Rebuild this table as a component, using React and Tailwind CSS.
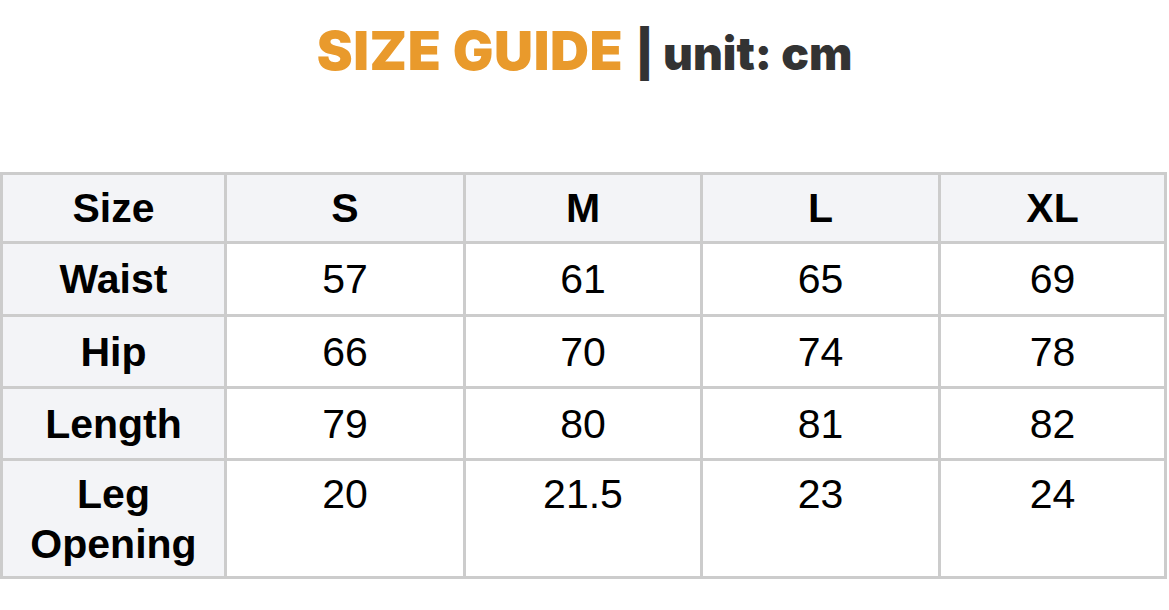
const cols = ["S", "M", "L", "XL"];

const rows = [
  { label: "Waist", values: ["57", "61", "65", "69"], h: "h-[70px]" },
  { label: "Hip", values: ["66", "70", "74", "78"], h: "h-[69px]" },
  { label: "Length", values: ["79", "80", "81", "82"], h: "h-[69px]" },
];

export default function App() {
  return (
    <div className="min-h-[610px] w-[1169px] bg-white font-['Liberation_Sans',Arial,sans-serif] text-black">
      <h1 className="flex items-baseline justify-center pt-[24px] font-['Inter',sans-serif] leading-none">
        <span className="text-[54px] font-black tracking-[0.6px] text-[#e99a2c]">SIZE GUIDE</span>
        <span className="ml-[12px] text-[46px] font-black text-[#333333]">| unit: cm</span>
      </h1>

      <div className="mt-[94px] grid w-[1167px] grid-cols-[221px_236px_234px_235px_223px] gap-[3px] bg-[#cccccc] p-[3px] text-[41px] leading-[50px]">
        <div className="flex h-[66px] items-center justify-center bg-[#f3f4f7] font-bold">Size</div>
        {cols.map((c) => (
          <div key={c} className="flex h-[66px] items-center justify-center bg-[#f3f4f7] font-bold">
            {c}
          </div>
        ))}

        {rows.map((r) => (
          <Row key={r.label} {...r} />
        ))}

        <div className="flex h-[115px] flex-col items-center justify-start bg-[#f3f4f7] pt-[8px] text-center font-bold">
          <span>Leg</span>
          <span>Opening</span>
        </div>
        {["20", "21.5", "23", "24"].map((v) => (
          <div key={v} className="flex h-[115px] items-start justify-center bg-white pt-[8px]">
            {v}
          </div>
        ))}
      </div>
    </div>
  );
}

function Row({ label, values, h }) {
  return (
    <>
      <div className={`flex items-center justify-center bg-[#f3f4f7] font-bold ${h}`}>{label}</div>
      {values.map((v, i) => (
        <div key={i} className={`flex items-center justify-center bg-white ${h}`}>
          {v}
        </div>
      ))}
    </>
  );
}
